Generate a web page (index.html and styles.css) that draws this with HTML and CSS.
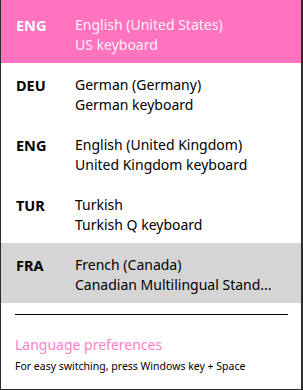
FILE: index.html
```html
<!DOCTYPE html>
<html>
<head>
<meta charset="utf-8">
<link rel="stylesheet" href="styles.css">
</head>
<body>
<div class="panel">
  <ul class="list">
    <li class="row active">
      <span class="code">ENG</span>
      <div class="names"><div class="lang">English (United States)</div><div class="kb">US keyboard</div></div>
    </li>
    <li class="row">
      <span class="code">DEU</span>
      <div class="names"><div class="lang">German (Germany)</div><div class="kb">German keyboard</div></div>
    </li>
    <li class="row">
      <span class="code">ENG</span>
      <div class="names"><div class="lang">English (United Kingdom)</div><div class="kb">United Kingdom keyboard</div></div>
    </li>
    <li class="row">
      <span class="code">TUR</span>
      <div class="names"><div class="lang">Turkish</div><div class="kb">Turkish Q keyboard</div></div>
    </li>
    <li class="row hover">
      <span class="code">FRA</span>
      <div class="names"><div class="lang">French (Canada)</div><div class="kb">Canadian Multilingual Stand...</div></div>
    </li>
  </ul>
  <div class="footer">
    <hr class="sep">
    <a class="prefs">Language preferences</a>
    <p class="hint">For easy switching, press Windows key + Space</p>
  </div>
</div>
</body>
</html>
```
FILE: styles.css
```css
html, body {
  margin: 0;
  padding: 0;
  background: #ffffff;
}
.panel {
  box-sizing: border-box;
  width: 303px;
  height: 390px;
  border-left: 1px solid #2b2b2b;
  border-right: 2px solid #2b2b2b;
  border-bottom: 1px solid #2b2b2b;
  background: #ffffff;
  font-family: "Noto Sans", "Open Sans", sans-serif;
  color: #000000;
  overflow: hidden;
}
.list {
  list-style: none;
  margin: 0;
  padding: 0;
}
.row {
  box-sizing: border-box;
  height: 60px;
  display: flex;
  padding: 12px 0 0 15px;
  font-size: 14px;
  line-height: 20px;
}
.row.active {
  height: 63px;
  padding-top: 15px;
  background: #ff73bf;
  color: #feeef7;
}
.row.active .code {
  color: #ffffff;
}
.row.hover {
  background: #d5d5d5;
}
.code {
  width: 59px;
  flex: none;
  font-weight: bold;
  font-size: 14.5px;
}
.names {
  min-width: 0;
  flex: 1;
  padding-right: 12px;
}
.lang, .kb {
  white-space: nowrap;
}
.footer {
  padding: 11px 13px 0 14px;
}
.sep {
  margin: 0;
  border: 0;
  border-top: 1px solid #000000;
  height: 0;
}
.prefs {
  display: block;
  margin-top: 20px;
  font-size: 14px;
  line-height: 20px;
  color: #ff80c8;
}
.hint {
  margin: 4px 0 0;
  font-size: 10.5px;
  line-height: 14px;
  color: #000000;
}
```
